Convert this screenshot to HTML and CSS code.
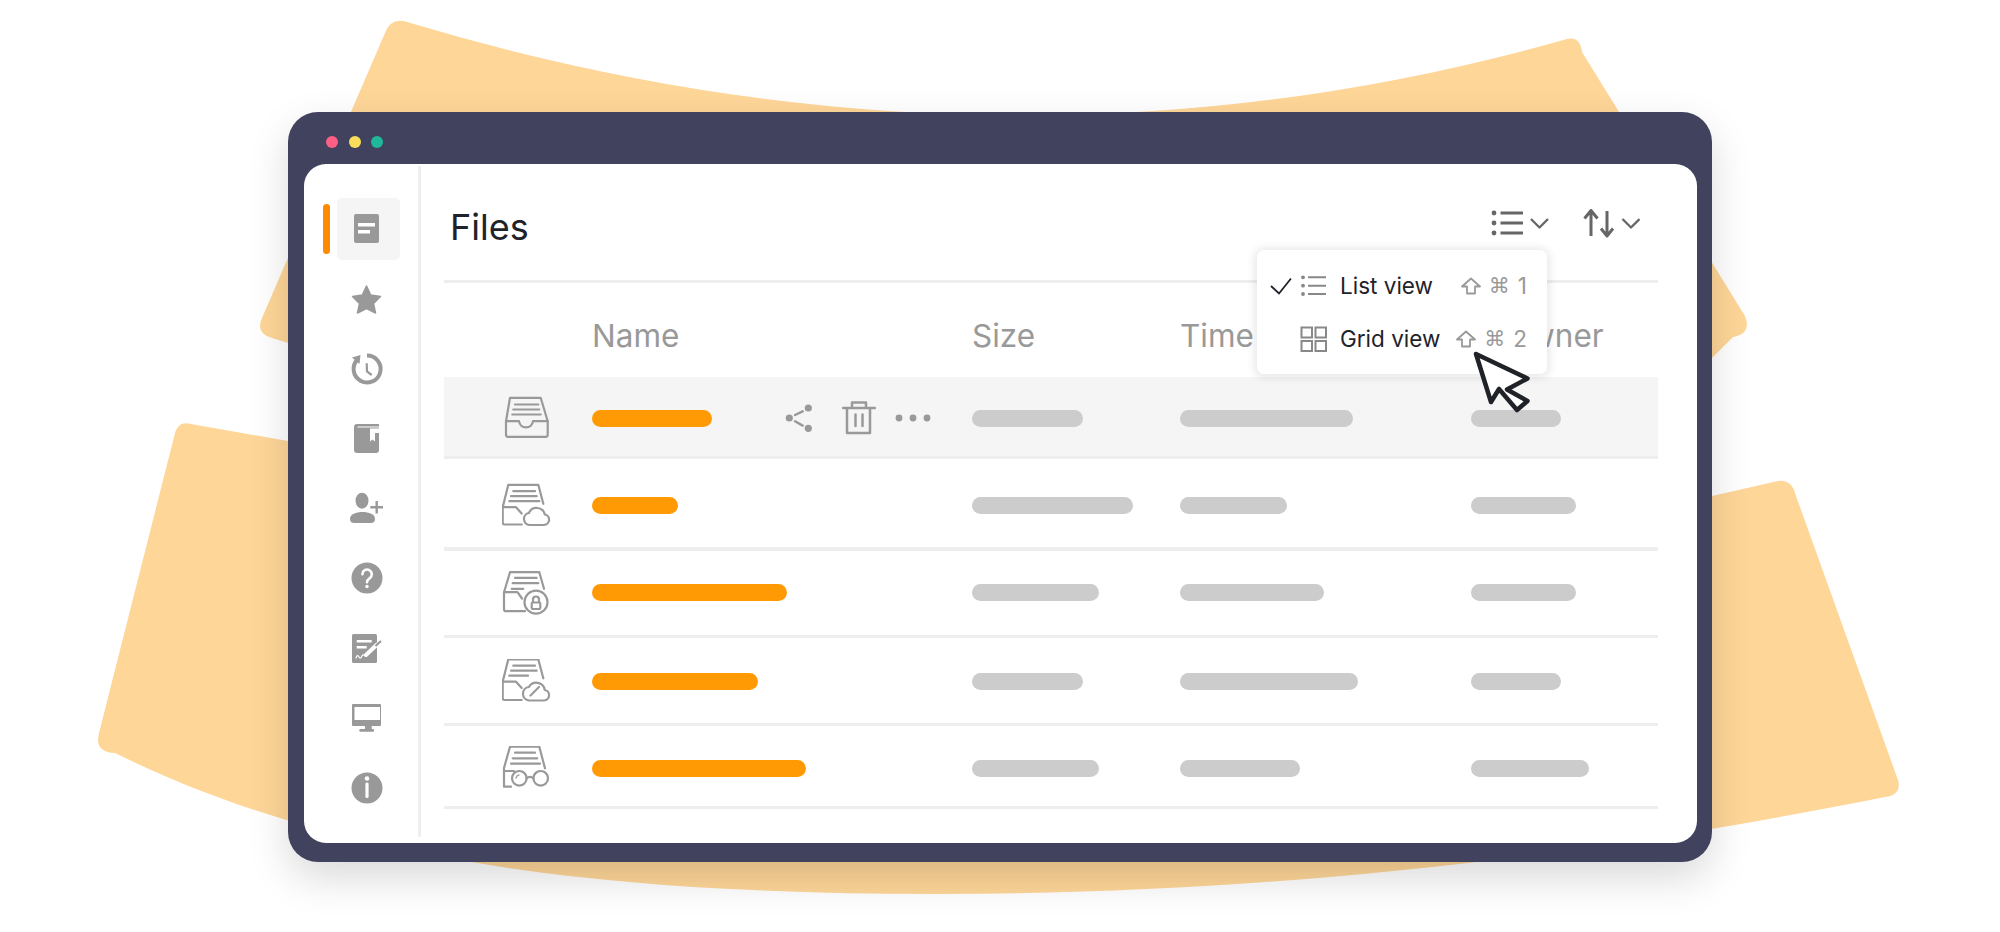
FILE: index.html
```html
<!DOCTYPE html>
<html>
<head>
    <meta charset="utf-8">
    <title>Files</title>
    <link rel="stylesheet" href="styles.css">
</head>
<body>
    <svg class="backdrop" width="2000" height="932" viewBox="0 0 2000 932">
        <path d="M385 33 Q391 17 407 22 Q1000 200 1567 39 Q1580 36 1582 52 L1745 316 Q1752 334 1733 337 L1712 358 L288 343 L272 338 Q255 333 262 318 Z"/>
        <path d="M174 437 Q177 420 191 424 L288 441 L1712 496 L1778 481 Q1792 479 1796 496 L1898 780 Q1902 795 1885 797 C1620 850 1300 894 935 894 C600 894 330 860 115 753 Q94 752 99 733 Z"/>
    </svg>

    <div class="window">
        <div class="titlebar">
            <span class="dot dot-red"></span>
            <span class="dot dot-yellow"></span>
            <span class="dot dot-green"></span>
        </div>
        <div class="content">
            <nav class="sidebar">
                <a class="nav-item active">
                    <svg class="nav-icon" viewBox="0 0 36 36"><rect x="5" y="3" width="25" height="29" rx="2"/><rect class="cut" x="9" y="12" width="17" height="3.5"/><rect class="cut" x="9" y="19" width="12" height="3.5"/></svg>
                </a>
                <a class="nav-item">
                    <svg class="nav-icon" viewBox="0 0 36 36"><polygon class="soft" points="17.5,5 21.7,14 31.5,15.5 24.5,22.5 26.5,32 17.5,27.5 8.5,32 10.5,22.5 3.5,15.5 13.3,14"/></svg>
                </a>
                <a class="nav-item">
                    <svg class="nav-icon" viewBox="0 0 36 36"><path class="line" d="M8.5 8.5A13.5 13.5 0 1 0 18 4.5" stroke-width="4"/><polygon points="11.5,4 3,6.5 10.5,13"/><path class="line" d="M17.7 12.3L18 20.5L22.7 24" stroke-width="2.2"/></svg>
                </a>
                <a class="nav-item">
                    <svg class="nav-icon" viewBox="0 0 36 36"><rect x="5" y="3" width="25" height="29" rx="3"/><rect x="26" y="3" width="4" height="4"/><path class="cut-line" d="M9 6H30" stroke-width="1.2"/><polygon class="cut" points="21,7.5 30,7.5 30,12 26,12 26,20.5 23.5,18.5 21,20.5"/></svg>
                </a>
                <a class="nav-item">
                    <svg class="nav-icon" viewBox="0 0 36 36"><ellipse cx="13" cy="9.7" rx="6.5" ry="8"/><path d="M1 28C1 23 7 21 13.5 21C20 21 26 23 26 28C26 31 24 32 22 32H5C3 32 1 31 1 28Z"/><path class="line" d="M27.7 10V22.5M21.3 16.3H34" stroke-width="2.4"/></svg>
                </a>
                <a class="nav-item">
                    <svg class="nav-icon" viewBox="0 0 36 36"><circle cx="18" cy="17" r="15.5"/><path class="cut-line" d="M13.4 13.2a4.7 4.7 0 1 1 7.4 3.9c-1.9 1.4-2.8 2.2-2.8 4.2" stroke-width="2.6"/><circle class="cut" cx="18" cy="25.5" r="1.7"/></svg>
                </a>
                <a class="nav-item">
                    <svg class="nav-icon" viewBox="0 0 36 36"><rect x="3" y="3" width="25" height="29" rx="1.5"/><rect class="cut" x="7.7" y="9" width="15" height="2.5"/><rect class="cut" x="7.7" y="15" width="10" height="2.5"/><path class="cut-line" d="M7 27c1-3 2-3 3-1s2 1 3-1 2-1 4 0" stroke-width="1.2"/><path class="cut-line" d="M17 24L28 13.5" stroke-width="4"/><path class="line" d="M26.5 15L32 10" stroke-width="2.2"/></svg>
                </a>
                <a class="nav-item">
                    <svg class="nav-icon" viewBox="0 0 36 36"><rect x="3" y="3" width="29" height="22" rx="1"/><rect class="cut" x="5.5" y="6" width="25.5" height="13"/><rect x="16" y="25" width="6.7" height="3.5"/><rect x="10.3" y="28" width="14.7" height="2.7" rx="1"/></svg>
                </a>
                <a class="nav-item">
                    <svg class="nav-icon" viewBox="0 0 36 36"><circle cx="18" cy="17" r="15.5"/><circle class="cut" cx="18" cy="7.5" r="2.3"/><rect class="cut" x="16.4" y="11.5" width="3.2" height="15.5" rx="1.5"/></svg>
                </a>
            </nav>

            <main class="main">
                <header class="topbar">
                    <h1 class="title">Files</h1>
                    <div class="toolbar">
                        <svg class="tool-icon" width="58" height="30" viewBox="0 0 58 30"><circle class="tool-dot" cx="3" cy="4" r="2.4"/><circle class="tool-dot" cx="3" cy="14" r="2.4"/><circle class="tool-dot" cx="3" cy="24" r="2.4"/><path d="M9.5 4H32M9.5 14H32M9.5 24H32" stroke-width="3"/><path d="M40 10L48.5 18.5L57 10" stroke-width="2.3"/></svg>
                        <svg class="tool-icon" width="57" height="30" viewBox="0 0 57 30"><path d="M8 27V2M1.5 9.5L8 1.5L14.5 9.5" stroke-width="3"/><path d="M24 2V27M18 19.5L24 27L30 19.5" stroke-width="3"/><path d="M39.5 10L48 18.5L56.5 10" stroke-width="2.3"/></svg>
                    </div>
                </header>

                <div class="row-grid head-row">
                    <span></span>
                    <span>Name</span>
                    <span>Size</span>
                    <span>Time</span>
                    <span class="head-owner">Owner</span>
                </div>

                <div class="row-grid row row-1">
                    <svg class="file-icon" width="50" height="44" viewBox="0 .5 50 44">
                        <path d="M4 25.7L8 2.3H38.7L45.7 25.7"/>
                        <path d="M4 25.7H17C18 34 30 34 31 25.7H45.7V39.3Q45.7 41.3 43.7 41.3H6Q4 41.3 4 39.3Z"/>
                        <path d="M13 9H36.3M11.3 14H37.3M10.3 19H38.7"/>
                    </svg>
                    <div class="name-cell">
                        <span class="bar bar-name" style="width: 120px"></span>
                        <div class="row-actions">
                            <svg class="file-icon" width="27" height="30" viewBox="0 0 27 30">
                                <circle class="solid" cx="4.3" cy="15" r="3.6"/><circle class="solid" cx="23.3" cy="5" r="3.6"/><circle class="solid" cx="23.3" cy="25.3" r="3.6"/>
                                <path d="M10 12L17.7 8.3M10 18.3L17.7 22.6" stroke-width="2.4"/>
                            </svg>
                            <svg class="file-icon" width="34" height="34" viewBox="0 0 34 34">
                                <path d="M1 7H33M10 7V1.5H24V7M5 7V32H28V7M13.5 13.5V25M20.5 13.5V25" stroke-width="2.5"/>
                            </svg>
                            <svg class="file-icon" width="36" height="8" viewBox="0 0 36 8">
                                <circle class="solid" cx="4" cy="4" r="3.4"/><circle class="solid" cx="18" cy="4" r="3.4"/><circle class="solid" cx="32" cy="4" r="3.4"/>
                            </svg>
                        </div>
                    </div>
                    <span class="bar" style="width: 111px"></span>
                    <span class="bar" style="width: 173px"></span>
                    <span class="bar" style="width: 90px"></span>
                </div>

                <div class="row-grid row row-2">
                    <svg class="file-icon" width="50" height="44" viewBox="0 .5 50 44">
                        <path d="M.7 24.7L6.3 2.3H36.3L41.3 21.3"/>
                        <path d="M19.7 31L14 24.7H.7V40Q.7 42 2.7 42H19.7"/>
                        <path d="M11.3 8.7H33M9 13.7H34.7M7.3 18.7H37.3"/>
                        <path d="M27 42.5H42a5.3 5.3 0 0 0 .8-10.5 8.4 8.4 0 0 0-15.9-1.5 6.1 6.1 0 0 0 .1 12Z"/>
                    </svg>
                    <div class="name-cell"><span class="bar bar-name" style="width: 86px"></span></div>
                    <span class="bar" style="width: 161px"></span>
                    <span class="bar" style="width: 107px"></span>
                    <span class="bar" style="width: 105px"></span>
                </div>

                <div class="row-grid row row-3">
                    <svg class="file-icon" width="50" height="44" viewBox="0 1.5 50 44">
                        <path d="M2 22.7L8 2.7H37.3L42 19.3"/>
                        <path d="M20 29L15.5 22.7H2V39.7Q2 41.7 4 41.7H23"/>
                        <path d="M13 8.3H34.7M10.7 13.7H36.3M9.7 19.3H21.3"/>
                        <circle cx="34" cy="32.7" r="11.5"/>
                        <path d="M31 32.5V30A3 3 0 0 1 37 30V32.5"/>
                        <rect x="29.7" y="33" width="8.6" height="6.5" rx="1"/>
                    </svg>
                    <div class="name-cell"><span class="bar bar-name" style="width: 195px"></span></div>
                    <span class="bar" style="width: 127px"></span>
                    <span class="bar" style="width: 144px"></span>
                    <span class="bar" style="width: 105px"></span>
                </div>

                <div class="row-grid row row-4">
                    <svg class="file-icon" width="50" height="44" viewBox="0 2 50 44">
                        <path d="M.7 24.7L6.3 2.3H36.3L41.3 21.3"/>
                        <path d="M19.7 31L14 24.7H.7V41Q.7 43 2.7 43H19.7"/>
                        <path d="M11.3 8.7H33M9 13.7H34.7M7.3 18.7H26"/>
                        <path d="M27 43.5H42a5.3 5.3 0 0 0 .8-10.5 8.6 8.6 0 0 0-15.9-3 6.8 6.8 0 0 0 .1 13.5Z"/>
                        <path d="M28.5 38.5L37 30"/>
                    </svg>
                    <div class="name-cell"><span class="bar bar-name" style="width: 166px"></span></div>
                    <span class="bar" style="width: 111px"></span>
                    <span class="bar" style="width: 178px"></span>
                    <span class="bar" style="width: 90px"></span>
                </div>

                <div class="row-grid row row-5">
                    <svg class="file-icon" width="50" height="44" viewBox="0 2 50 44">
                        <path d="M2 25V42.7H9M2 24L8 2.7H37.3L43 24.3"/>
                        <path d="M2 27H12"/>
                        <path d="M13 8.7H33M10.7 14.3H35.3M9 19.7H38"/>
                        <circle cx="17.3" cy="34.3" r="7.3"/>
                        <circle cx="38.7" cy="34.3" r="7.3"/>
                        <path d="M24.6 34.3Q28 31.5 31.4 34.3"/>
                        <path d="M14 34A4 4 0 0 1 17 30.8" stroke-width="1.3"/>
                    </svg>
                    <div class="name-cell"><span class="bar bar-name" style="width: 214px"></span></div>
                    <span class="bar" style="width: 127px"></span>
                    <span class="bar" style="width: 120px"></span>
                    <span class="bar" style="width: 118px"></span>
                </div>

                <div class="menu">
                    <div class="menu-item">
                        <svg class="check" width="24" height="18" viewBox="0 0 24 18"><path d="M2 9L10 16.5L22 1.5"/></svg>
                        <svg class="menu-icon" width="28" height="24" viewBox="0 0 28 24"><circle class="tool-dot" cx="3" cy="3.3" r="1.9"/><circle class="tool-dot" cx="3" cy="11.7" r="1.9"/><circle class="tool-dot" cx="3" cy="20" r="1.9"/><path d="M8 3.3H26M8 11.7H26M8 20H26"/></svg>
                        <span class="menu-label">List view</span>
                        <span class="shortcut">
                            <svg class="shift" width="20" height="18" viewBox="0 0 20 18"><path d="M10 1.5L19 9.5H14V16.5H6V9.5H1Z"/></svg>
                            <span class="cmd">⌘</span>
                            <span>1</span>
                        </span>
                    </div>
                    <div class="menu-item">
                        <span class="check"></span>
                        <svg class="menu-icon" width="28" height="26" viewBox="0 0 28 26"><rect x="1.5" y="1.5" width="10.5" height="10"/><rect x="15.5" y="1.5" width="10.5" height="10"/><rect x="1.5" y="15" width="10.5" height="10"/><rect x="15.5" y="15" width="10.5" height="10"/></svg>
                        <span class="menu-label">Grid view</span>
                        <span class="shortcut">
                            <svg class="shift" width="20" height="18" viewBox="0 0 20 18"><path d="M10 1.5L19 9.5H14V16.5H6V9.5H1Z"/></svg>
                            <span class="cmd">⌘</span>
                            <span>2</span>
                        </span>
                    </div>
                </div>

                <svg class="cursor" width="60" height="64" viewBox="0 0 60 64">
                    <path d="M3 3L54.5 27.5L34 38.5L54.5 50L44 59L26 38L18 51Z"/>
                </svg>
            </main>
        </div>
    </div>
</body>
</html>
```

FILE: styles.css
```css
html, body {
    margin: 0;
    padding: 0;
}

body {
    position: relative;
    width: 2000px;
    height: 932px;
    overflow: hidden;
    background-color: #fff;
    font-family: Inter, "Liberation Sans", sans-serif;
    color: #1f2329;
}

.backdrop {
    position: absolute;
    top: 0;
    left: 0;
    fill: #fed698;
}

.window {
    position: relative;
    box-sizing: border-box;
    width: 1424px;
    height: 750px;
    margin: 112px 0 0 288px;
    padding: 0 15px 19px 16px;
    display: flex;
    flex-direction: column;
    background-color: #41425e;
    border-radius: 30px;
    box-shadow: 0 16px 40px rgba(0, 0, 0, 0.15);
}

.titlebar {
    height: 52px;
    flex-shrink: 0;
    display: flex;
    align-items: center;
    gap: 10.5px;
    padding: 8px 0 0 22px;
    box-sizing: border-box;
}

.dot {
    width: 12px;
    height: 12px;
    border-radius: 50%;
}

.dot-red { background-color: #fd5f85; }
.dot-yellow { background-color: #fbdd5c; }
.dot-green { background-color: #1fb89a; }

.content {
    flex: 1;
    display: flex;
    background-color: #fff;
    border-radius: 22px;
    min-height: 0;
}

.sidebar {
    box-sizing: border-box;
    width: 117px;
    flex-shrink: 0;
    margin: 2px 0 6px;
    padding-top: 32px;
    border-right: 3px solid #eee;
}

.nav-item {
    position: relative;
    box-sizing: border-box;
    display: flex;
    align-items: center;
    justify-content: center;
    width: 63px;
    height: 62px;
    margin: 0 0 8px 33px;
    padding-right: 3px;
    border-radius: 5px;
}

.nav-item.active {
    background-color: #f5f5f5;
}

.nav-item.active::before {
    content: "";
    position: absolute;
    top: 6px;
    left: -14px;
    width: 7px;
    height: 50px;
    border-radius: 4px;
    background-color: #ff8a00;
}

.nav-icon {
    width: 36px;
    height: 36px;
    fill: #999;
}

.nav-icon .cut { fill: #fff; }
.nav-icon .soft { stroke: #999; stroke-width: 1.5; stroke-linejoin: round; }
.nav-icon .line { fill: none; stroke: #999; stroke-linecap: butt; }
.nav-icon .cut-line { fill: none; stroke: #fff; stroke-linecap: round; }

.main {
    position: relative;
    flex: 1;
    padding: 0 39px 0 23px;
}

.topbar {
    box-sizing: border-box;
    height: 119px;
    display: flex;
    justify-content: space-between;
    align-items: flex-start;
    border-bottom: 3px solid #eee;
}

.title {
    margin: 43px 0 0 6px;
    font-size: 36px;
    line-height: 40px;
    font-weight: 400;
    color: #1f2329;
}

.toolbar {
    display: flex;
    gap: 34px;
    margin: 45px 18px 0 0;
}

.tool-icon {
    fill: none;
    stroke: #666;
    stroke-linejoin: round;
}

.tool-icon .tool-dot {
    fill: #666;
    stroke: none;
}

.row-grid {
    display: grid;
    grid-template-columns: 148px 380px 208px 291px 187px;
    align-items: center;
}

.head-row {
    box-sizing: border-box;
    height: 94px;
    padding-top: 10px;
    font-size: 31.5px;
    color: #999;
}

.head-owner {
    padding-left: 34px;
}

.row {
    box-sizing: border-box;
    border-bottom: 3px solid #eee;
}

.row-1 { height: 82px; padding-top: 3px; background-color: #f5f5f5; }
.row-2 { height: 92px; padding-top: 4px; border-bottom-width: 4px; }
.row-3 { height: 87px; padding-bottom: 1px; }
.row-4 { height: 88px; padding-top: 1px; }
.row-5 { height: 83px; padding-top: 4px; }

.file-icon {
    margin-left: 58px;
    fill: none;
    stroke: #999;
    stroke-width: 2.2;
    stroke-linecap: round;
    stroke-linejoin: round;
}

.file-icon .solid {
    fill: #999;
    stroke: none;
}

.name-cell {
    display: flex;
    align-items: center;
}

.row-actions {
    display: flex;
    align-items: center;
    gap: 30px;
    margin-left: 73px;
}

.row-actions .file-icon {
    margin-left: 0;
}

.row-actions .file-icon:last-child {
    margin-left: -11px;
}

.bar {
    display: block;
    height: 17px;
    border-radius: 9px;
    background-color: #ccc;
}

.bar-name {
    background-color: #ff9a05;
}

.menu {
    position: absolute;
    top: 86px;
    left: 836px;
    box-sizing: border-box;
    width: 290px;
    height: 124px;
    padding: 9px 20px 7px 12px;
    background-color: #fff;
    border-radius: 7px;
    box-shadow: 0 1px 8px 3px rgba(0, 0, 0, 0.09);
}

.menu-item {
    display: flex;
    align-items: center;
    height: 53px;
    font-size: 22.5px;
}

.check {
    width: 24px;
    margin-right: 7px;
    fill: none;
    stroke: #1f2329;
    stroke-width: 1.8;
}

.menu-icon {
    margin-right: 12px;
    fill: none;
    stroke: #888;
    stroke-width: 2;
}

.menu-icon .tool-dot {
    fill: #888;
    stroke: none;
}

.shortcut {
    display: flex;
    align-items: center;
    gap: 8px;
    margin-left: auto;
    color: #999;
}

.shift {
    fill: none;
    stroke: #999;
    stroke-width: 1.8;
    stroke-linejoin: round;
}

.cmd {
    font-family: "DejaVu Sans", sans-serif;
    font-size: 21px;
}

.cursor {
    position: absolute;
    top: 187px;
    left: 1052px;
    fill: #fff;
    stroke: #1f2327;
    stroke-width: 4.5;
    stroke-linejoin: round;
}
```
